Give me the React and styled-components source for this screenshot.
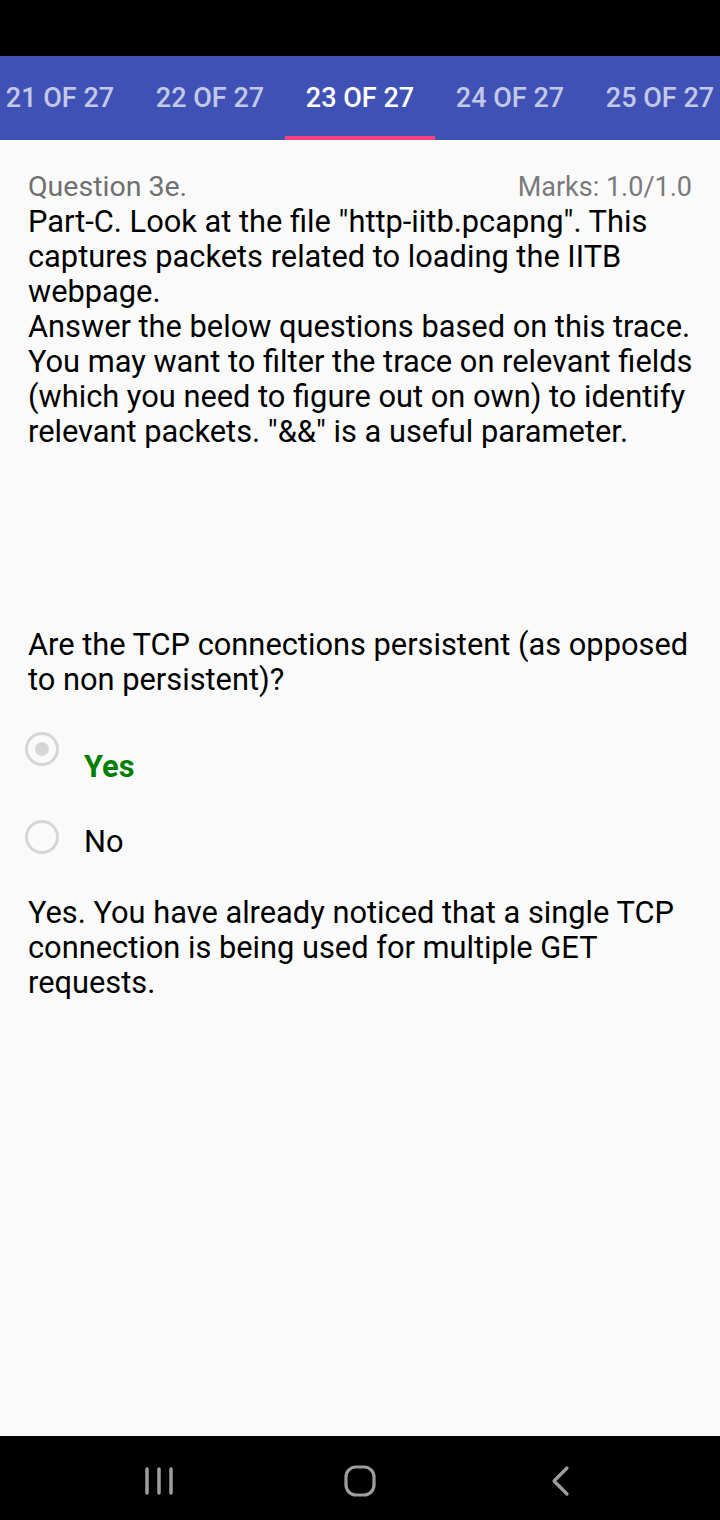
import React from 'react';
import styled, { createGlobalStyle } from 'styled-components';

const GlobalStyle = createGlobalStyle`
    html, body {
        margin: 0;
        padding: 0;
        background: #000;
    }
    * {
        box-sizing: border-box;
    }
`;

const Screen = styled.div`
    width: 720px;
    height: 1520px;
    display: flex;
    flex-direction: column;
    background: #fafafa;
    font-family: Roboto, "Liberation Sans", sans-serif;
    overflow: hidden;
`;

const StatusBar = styled.div`
    height: 56px;
    flex-shrink: 0;
    background: #000;
`;

const TabStrip = styled.div`
    height: 84px;
    flex-shrink: 0;
    display: flex;
    background: #3f51b5;
    overflow: hidden;
`;

const TabRow = styled.div`
    display: flex;
    margin-left: -15px;
`;

const Tab = styled.div`
    width: 150px;
    flex-shrink: 0;
    height: 84px;
    padding-top: 4px;
    display: flex;
    align-items: center;
    justify-content: center;
    border-bottom: 4px solid ${({ active }) => (active ? '#ff4081' : 'transparent')};
    color: ${({ active }) => (active ? '#ffffff' : 'rgba(255,255,255,0.7)')};
    font-size: 27px;
    font-weight: 500;
    white-space: nowrap;
`;

const Content = styled.div`
    flex: 1;
    padding: 32px 20px 0 28px;
`;

const Header = styled.div`
    display: flex;
    justify-content: space-between;
    align-items: baseline;
    line-height: 30px;
    padding-right: 8px;
`;

const QuestionNo = styled.span`
    color: #707070;
    font-size: 28.5px;
`;

const Marks = styled.span`
    color: #7a7a7a;
    font-size: 27px;
`;

const Text = styled.p`
    margin: ${({ top }) => top || 0}px 0 0 0;
    color: #000;
    font-size: 30.8px;
    line-height: 35px;
`;

const Options = styled.div`
    margin-top: 35px;
`;

const Option = styled.div`
    display: flex;
    align-items: flex-start;
    margin-bottom: 36px;
`;

const Radio = styled.div`
    width: 34px;
    height: 34px;
    margin-left: -3px;
    flex-shrink: 0;
    border: 3.3px solid #d6d6d6;
    border-radius: 50%;
    display: flex;
    align-items: center;
    justify-content: center;
    &::after {
        content: '';
        width: 14px;
        height: 14px;
        border-radius: 50%;
        background: ${({ checked }) => (checked ? '#d6d6d6' : 'transparent')};
    }
`;

const OptionLabel = styled.span`
    margin-left: 25px;
    margin-top: ${({ offset }) => offset}px;
    font-size: 30.8px;
    line-height: 35px;
    font-weight: ${({ correct }) => (correct ? 700 : 400)};
    color: ${({ correct }) => (correct ? '#008000' : '#000')};
`;

const NavBar = styled.div`
    height: 84px;
    flex-shrink: 0;
    background: #000;
    display: flex;
    align-items: center;
    justify-content: center;
    gap: 101px;
`;

const NavButton = styled.div`
    width: 100px;
    display: flex;
    justify-content: center;
    padding-top: 6px;
`;

const tabs = [21, 22, 23, 24, 25];

export default function App() {
    return (
        <Screen>
            <GlobalStyle />
            <StatusBar />
            <TabStrip>
                <TabRow>
                    {tabs.map((n) => (
                        <Tab key={n} active={n === 23}>{n} OF 27</Tab>
                    ))}
                </TabRow>
            </TabStrip>
            <Content>
                <Header>
                    <QuestionNo>Question 3e.</QuestionNo>
                    <Marks>Marks: 1.0/1.0</Marks>
                </Header>
                <Text top={2}>
                    Part-C. Look at the file "http-iitb.pcapng". This captures packets related to loading the IITB webpage.
                    <br />
                    Answer the below questions based on this trace. You may want to filter the trace on relevant fields (which you need to figure out on own) to identify relevant packets. "&amp;&amp;" is a useful parameter.
                </Text>
                <Text top={178}>
                    Are the TCP connections persistent (as opposed to non persistent)?
                </Text>
                <Options>
                    <Option>
                        <Radio checked />
                        <OptionLabel offset={17} correct>Yes</OptionLabel>
                    </Option>
                    <Option>
                        <Radio />
                        <OptionLabel offset={4}>No</OptionLabel>
                    </Option>
                </Options>
                <Text top={4}>
                    Yes. You have already noticed that a single TCP connection is being used for multiple GET requests.
                </Text>
            </Content>
            <NavBar>
                <NavButton>
                    <svg width="30" height="30" viewBox="0 0 30 30">
                        <g stroke="#9e9e9e" strokeWidth="3.5" strokeLinecap="round">
                            <line x1="3" y1="3" x2="3" y2="27" />
                            <line x1="15" y1="3" x2="15" y2="27" />
                            <line x1="27" y1="3" x2="27" y2="27" />
                        </g>
                    </svg>
                </NavButton>
                <NavButton>
                    <svg width="34" height="34" viewBox="0 0 34 34">
                        <rect x="3" y="3" width="28" height="28" rx="10" fill="none" stroke="#9e9e9e" strokeWidth="3.2" />
                    </svg>
                </NavButton>
                <NavButton>
                    <svg width="22" height="32" viewBox="0 0 22 32">
                        <polyline points="17,3 4,16 17,29" fill="none" stroke="#9e9e9e" strokeWidth="3.2" strokeLinecap="round" strokeLinejoin="round" />
                    </svg>
                </NavButton>
            </NavBar>
        </Screen>
    );
}
